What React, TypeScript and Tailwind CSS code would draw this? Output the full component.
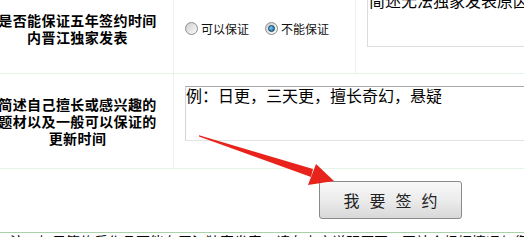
import type { ReactNode } from 'react';

const FONT = "font-['SimSun','Noto_Sans_CJK_SC',sans-serif]";

type RadioProps = { label: string; checked?: boolean };

const Radio = ({ label, checked }: RadioProps) => (
  <label className="flex items-center">
    <span className="flex h-[13px] w-[13px] items-center justify-center rounded-full border border-[#8d8d8d] bg-[linear-gradient(135deg,#cfcfcf,#fbfbfb)]">
      {checked && (
        <span className="h-[7px] w-[7px] rounded-full border border-[#0c3e66] bg-[radial-gradient(circle_at_35%_35%,#7cc8f2,#10609e)]" />
      )}
    </span>
    <span className="ml-[3px] text-[12px] leading-[14px] text-[#111]">{label}</span>
  </label>
);

const LabelCell = ({ children }: { children: ReactNode }) => (
  <div className="flex w-[174px] shrink-0 items-center justify-center border-r border-[#eaf2ea] pr-[18px]">
    <p className="whitespace-nowrap text-center text-[14px] font-bold leading-[17px] tracking-[0.4px] text-black">
      {children}
    </p>
  </div>
);

export default function App() {
  return (
    <div className={`relative h-[237px] w-[524px] overflow-hidden bg-white ${FONT}`}>
      <div className="-mt-[16px]">
        {/* row 1 */}
        <div className="flex h-[90px] border-b border-[#e6f4e8]">
          <LabelCell>
            是否能保证五年签约时间
            <br />
            内晋江独家发表
          </LabelCell>
          <div className="flex w-[182px] shrink-0 items-center gap-[16px] border-r border-[#eaf2ea] pl-[11px]">
            <Radio label="可以保证" />
            <Radio label="不能保证" checked />
          </div>
          <div className="flex-1 pl-[11px] pt-[6px]">
            <textarea
              readOnly
              value="简述无法独家发表原因"
              className={`block h-[57px] w-[200px] resize-none border border-[#dcdcdc] px-[1px] py-0 text-[16px] leading-[18px] text-black outline-none ${FONT}`}
            />
          </div>
        </div>

        {/* row 2 */}
        <div className="flex h-[95px] border-b border-[#e6f4e8]">
          <LabelCell>
            简述自己擅长或感兴趣的
            <br />
            题材以及一般可以保证的
            <br />
            更新时间
          </LabelCell>
          <div className="flex-1 pl-[11px] pt-[12px]">
            <textarea
              readOnly
              value="例：日更，三天更，擅长奇幻，悬疑"
              className={`block h-[55px] w-[360px] resize-none border border-t-[#a8a8a8] border-l-[#d6d6d6] border-b-[#e2e2e2] border-r-[#d6d6d6] px-0 py-0 text-[16px] leading-[16px] text-black outline-none ${FONT}`}
            />
          </div>
        </div>

        {/* row 3 */}
        <div className="h-[64px] border-b border-[#a9d2a9] pl-[319px] pt-[12px]">
          <button className="flex h-[38px] w-[143px] items-center justify-center rounded-[3px] border border-[#8a8a8a] bg-gradient-to-b from-[#f8f8f8] via-[#ececec] to-[#d8d8d8] pl-[10px] text-[16px] tracking-[10px] text-[#222]">
            我要签约
          </button>
        </div>

        <p className="mt-[1px] whitespace-nowrap pl-[10px] text-[14px] leading-[14px] text-black">
          注：如果签约后作品不能在晋江独家发表，请在上方说明原因，网站会根据情况与您联系。
        </p>
      </div>

      {/* red arrow */}
      <svg className="pointer-events-none absolute left-0 top-0" width="524" height="237">
        <polygon points="199,135.2 313,169 311,177 199,136.6" fill="#e8231b" />
        <polygon points="334,181 308,185 316,164" fill="#e8231b" />
      </svg>
    </div>
  );
}
